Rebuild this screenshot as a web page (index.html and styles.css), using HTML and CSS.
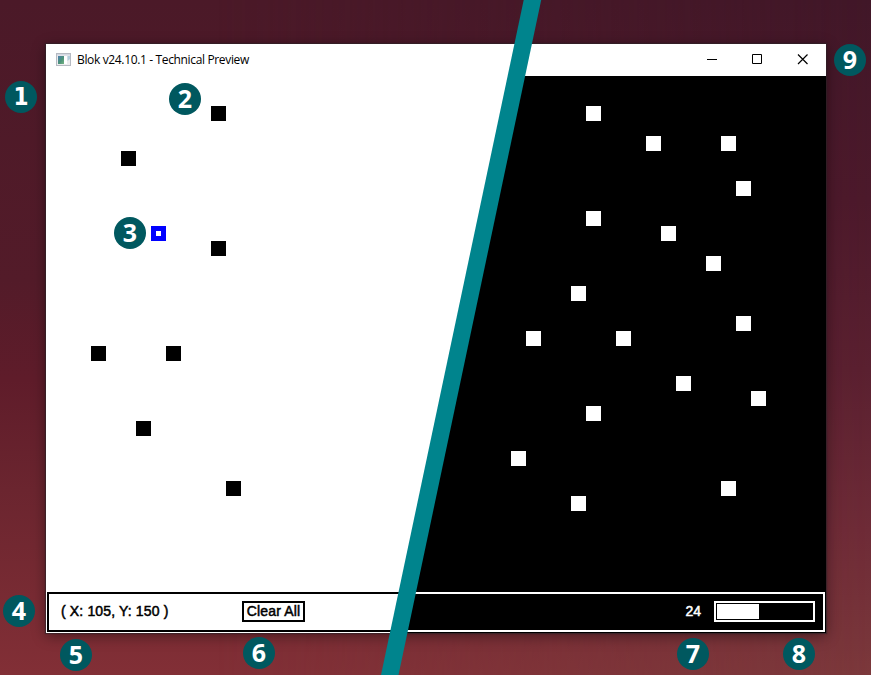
FILE: index.html
```html
<!DOCTYPE html>
<html lang="en">
<head>
<meta charset="utf-8">
<title>Blok v24.10.1</title>
<link rel="stylesheet" href="styles.css">
</head>
<body>
<main class="desktop">
  <section class="window">
    <header class="titlebar">
      <svg class="app-icon" width="16" height="14" viewBox="0 0 16 14">
        <defs><linearGradient id="g" x1="0" y1="0" x2="1" y2="1"><stop stop-color="#4d7eb0"/><stop offset=".55" stop-color="#4b9278"/><stop offset="1" stop-color="#76b382"/></linearGradient></defs>
        <rect x=".5" y=".5" width="14" height="12" fill="#ececee" stroke="#b6bac2"/>
        <rect x="1" y="1" width="13" height="1.500" fill="#d3d8e2"/>
        <rect x="2" y="3" width="6" height="8" fill="url(#g)"/>
        <rect x="8" y="3" width="3" height="8" fill="#fff"/>
        <path d="M11.500 3H14v3l-2.500 2z" fill="#b3cddc"/>
      </svg>
      <h1 class="title">Blok v24.10.1 - Technical Preview</h1>
      <svg class="controls" width="101" height="11" viewBox="0 0 101 11" fill="none" stroke="#000">
        <path d="M0 5.500h10"/>
        <path d="M45.500 .5h9v9h-9z"/>
        <path d="M91 .5l9.500 9.500M100.500 .5L91 10" stroke-width="1.200"/>
      </svg>
    </header>
    <div class="panes">
      <div class="pane light">
        <div class="field" id="light-field"></div>
        <footer class="status">
          <span class="coords">( X: 105, Y: 150 )</span>
          <button class="clear">Clear All</button>
        </footer>
      </div>
      <div class="pane dark">
        <div class="field" id="dark-field"></div>
        <footer class="status end">
          <span class="count">24</span>
          <div class="meter"><div class="fill"></div></div>
        </footer>
      </div>
    </div>
  </section>
  <svg class="stripe" width="871" height="675" viewBox="0 0 871 675"><path d="M523.700 0H541.200L398.500 675H381z" fill="#00848d"/></svg>
  <div id="badges"></div>
</main>
<script src="app.js"></script>
</body>
</html>
```
FILE: styles.css
```css
* { box-sizing: border-box; }
body { margin: 0; overflow: hidden; }
.desktop {
  position: relative;
  width: 871px;
  height: 675px;
  padding: 44px 45px 42px 46px;
  background: linear-gradient(#4b1928 0, #531b29 280px, #5f1c2a 380px, #6b252f 490px, #822f36 100%);
}
.desktop::before {
  content: "";
  position: absolute;
  inset: 0;
  background: linear-gradient(#411728 0, #4c192b 200px, #5a2030 370px, #6e2b37 530px, #7b383b 100%);
  -webkit-mask-image: linear-gradient(to right, transparent 25%, #000);
  mask-image: linear-gradient(to right, transparent 25%, #000);
}
.window {
  position: relative;
  display: flex;
  flex-direction: column;
  width: 780px;
  height: 589px;
  background: #fff;
  box-shadow: 0 0 1px 1px rgba(45, 35, 40, .6), 0 3px 13px rgba(0, 0, 0, .42);
}
.titlebar {
  display: flex;
  align-items: center;
  height: 32px;
  padding: 0 18px 0 10px;
}
.title {
  margin: 0 auto 0 5px;
  font: 400 12px/16px "Open Sans", "Noto Sans", sans-serif;
  letter-spacing: -.35px;
  white-space: nowrap;
}
.controls { margin-bottom: 1px; }
.panes { display: grid; flex: 1; }
.pane {
  grid-area: 1 / 1;
  display: flex;
  flex-direction: column;
  padding: 0 1px 1px;
}
.light { color: #000; background: #fff; }
.dark {
  color: #fff;
  background: #000;
  clip-path: polygon(471px 0, 780px 0, 780px 100%, 353px 100%);
}
.field {
  flex: 1;
  display: grid;
  grid-template: repeat(34, 15px) / repeat(52, 15px);
  margin: 0 -1px;
}
.block { background: currentColor; }
.cursor { background: #fff; border: 5px solid #00f; }
.status {
  display: flex;
  align-items: center;
  height: 40px;
  padding: 0 8px 2px 12px;
  border: 2px solid currentColor;
  font: 400 14px/17px "Liberation Sans", sans-serif;
  -webkit-text-stroke: .5px currentColor;
}
.end { justify-content: flex-end; padding-bottom: 1px; }
.coords { width: 181px; white-space: nowrap; letter-spacing: .15px; }
.clear {
  display: flex;
  justify-content: center;
  align-items: center;
  width: 63px;
  height: 21px;
  padding: 0;
  border: 2px solid currentColor;
  background: none;
  color: inherit;
  font: inherit;
  letter-spacing: .15px;
  white-space: nowrap;
  -webkit-text-stroke: inherit;
}
.count { margin-right: 13px; }
.meter { width: 101px; height: 21px; padding: 1px; border: 2px solid currentColor; }
.fill { width: 42px; height: 15px; background: currentColor; }
.stripe { position: absolute; left: 0; top: 0; }
.badge {
  position: absolute;
  width: 32px;
  height: 32px;
  border-radius: 50%;
  background: #00585f;
  color: #fff;
  font: 700 25px/31px "Open Sans", "Noto Sans", sans-serif;
  text-align: center;
}
.one { font: 700 24px/32px "DejaVu Sans Condensed", "DejaVu Sans", sans-serif; }
```
FILE: app.js
```js
const lightBlocks = [[11,2],[5,5],[11,11],[3,18],[8,18],[6,23],[12,27]];
const darkBlocks = [[36,2],[40,4],[45,4],[46,7],[36,9],[41,10],[44,12],[35,14],[46,16],[32,17],[38,17],[42,20],[47,21],[36,22],[31,25],[35,28],[45,27]];

function place(fieldId, cells, name) {
  const field = document.getElementById(fieldId);
  for (const [col, row] of cells) {
    const cell = document.createElement('div');
    cell.className = name;
    cell.style.gridArea = `${row + 1} / ${col + 1}`;
    field.append(cell);
  }
}
place('light-field', lightBlocks, 'block');
place('light-field', [[7, 10]], 'cursor');
place('dark-field', darkBlocks, 'block');

// Callout centres, in order of their numbers
const centres = [[21,97],[185,99],[130,233],[19,611],[76,655],[259,653],[693,654],[799,654],[850,60]];
centres.forEach(([x, y], i) => {
  const badge = document.createElement('div');
  badge.className = i === 0 ? 'badge one' : 'badge';
  badge.textContent = i + 1;
  badge.style.left = `${x - 16}px`;
  badge.style.top = `${y - 16}px`;
  document.getElementById('badges').append(badge);
});
```
